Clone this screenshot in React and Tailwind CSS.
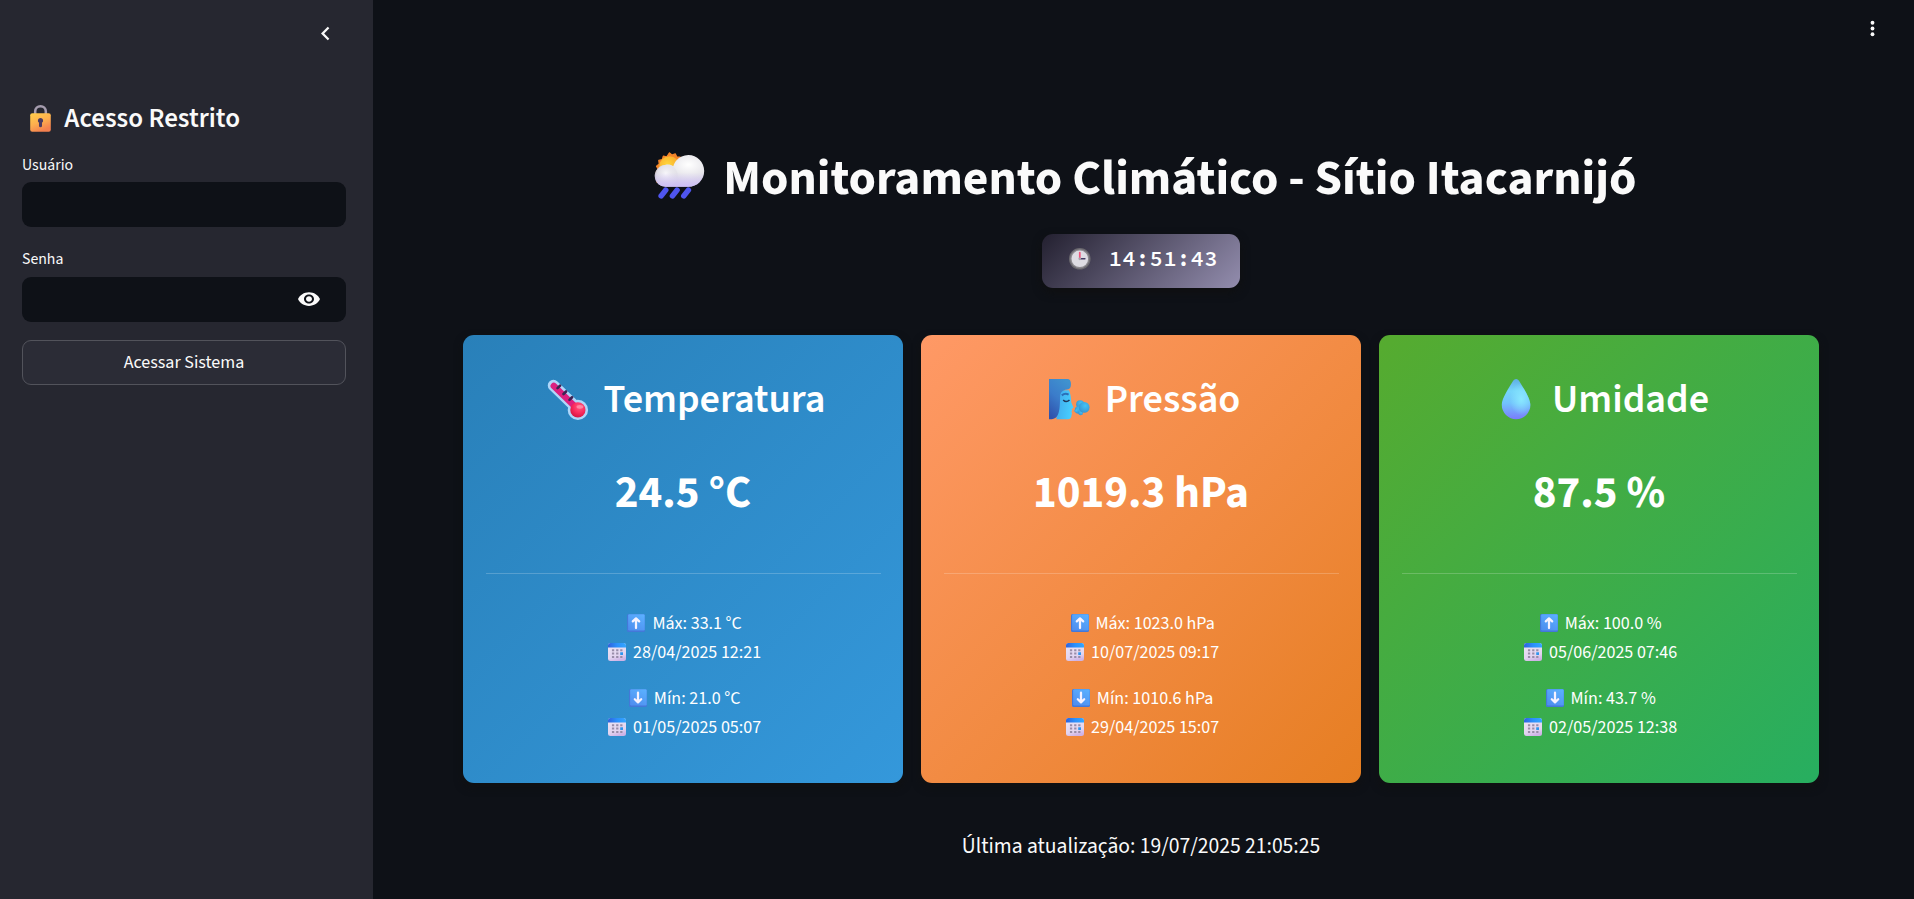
function Gradients() {
  return (
    <svg className="absolute size-0" aria-hidden="true">
      <defs>
        <linearGradient id="lockBody" x1="0" y1="0" x2="0.5" y2="1">
          <stop offset="0" stopColor="#ffce4a" />
          <stop offset="0.55" stopColor="#fdb04e" />
          <stop offset="1" stopColor="#f4804f" />
        </linearGradient>
        <radialGradient id="sun" cx="0.4" cy="0.4" r="0.6">
          <stop offset="0" stopColor="#ffd83b" />
          <stop offset="1" stopColor="#f9a62a" />
        </radialGradient>
        <radialGradient id="cloudBack" cx="0.68" cy="0.3" r="0.75">
          <stop offset="0" stopColor="#ffffff" />
          <stop offset="0.5" stopColor="#e6e5ea" />
          <stop offset="1" stopColor="#c9c6d2" />
        </radialGradient>
        <linearGradient id="cloudBase" x1="0" y1="0" x2="0" y2="1">
          <stop offset="0.55" stopColor="#d7c8ff" stopOpacity="0" />
          <stop offset="1" stopColor="#cdbcfb" stopOpacity="0.9" />
        </linearGradient>
        <radialGradient id="cloudFront" cx="0.45" cy="0.4" r="0.6">
          <stop offset="0" stopColor="#f8f7fb" />
          <stop offset="1" stopColor="#dcdae2" stopOpacity="0.5" />
        </radialGradient>
        <linearGradient id="drop" x1="0.5" y1="0" x2="0.5" y2="1">
          <stop offset="0" stopColor="#5faee4" />
          <stop offset="0.3" stopColor="#76d6fb" />
          <stop offset="0.6" stopColor="#72c3fc" />
          <stop offset="1" stopColor="#7a7cfb" />
        </linearGradient>
        <radialGradient id="dropLight" cx="0.68" cy="0.5" r="0.4">
          <stop offset="0" stopColor="#8beaff" stopOpacity="0.95" />
          <stop offset="1" stopColor="#8beaff" stopOpacity="0" />
        </radialGradient>
        <radialGradient id="bulb" cx="0.6" cy="0.3" r="0.75">
          <stop offset="0" stopColor="#ff5c83" />
          <stop offset="0.5" stopColor="#fb2d60" />
          <stop offset="1" stopColor="#d3123f" />
        </radialGradient>
        <linearGradient id="hair" x1="0.7" y1="0" x2="0.2" y2="1">
          <stop offset="0" stopColor="#3f92cf" />
          <stop offset="0.5" stopColor="#3b7cca" />
          <stop offset="1" stopColor="#2f52ac" />
        </linearGradient>
        <linearGradient id="face" x1="0" y1="0" x2="1" y2="0.2">
          <stop offset="0" stopColor="#3fa6ea" />
          <stop offset="1" stopColor="#47ceff" />
        </linearGradient>
        <radialGradient id="puff" cx="0.6" cy="0.35" r="0.7">
          <stop offset="0" stopColor="#43c3f5" />
          <stop offset="1" stopColor="#3792cf" />
        </radialGradient>
        <linearGradient id="arrowTile" x1="0.8" y1="0" x2="0.3" y2="1">
          <stop offset="0" stopColor="#5ab0ff" />
          <stop offset="1" stopColor="#4f8ff0" />
        </linearGradient>
        <linearGradient id="calTop" x1="0" y1="0" x2="1" y2="0">
          <stop offset="0" stopColor="#2f62dc" />
          <stop offset="0.5" stopColor="#2b90fb" />
          <stop offset="1" stopColor="#34a6ff" />
        </linearGradient>
        <linearGradient id="calPage" x1="0.2" y1="0" x2="0.5" y2="1">
          <stop offset="0" stopColor="#ece5f3" />
          <stop offset="0.75" stopColor="#e2d4f0" />
          <stop offset="1" stopColor="#cfb3e6" />
        </linearGradient>
      </defs>
    </svg>
  );
}

/* Inline pictogram: one em tall, with the side bearings of an emoji glyph. */
function Glyph({ viewBox = "0 0 32 32", children }) {
  return (
    <svg viewBox={viewBox} className="mx-[0.185em] inline-block size-[1em] overflow-visible align-[-0.17em]">
      {children}
    </svg>
  );
}

const RainCloud = () => (
  <Glyph viewBox="-0.6 0.6 32.8 32.8">
    <path d="M9 .5l1.600 1.400 2.200-.7 1.100 2 2.200.1.400 2.300 1.500 1.400V20H.800V15.500L.2 13.200l1.300-1.800L.4 9.300l1.800-1.500-.3-2.300 2.300-.5.700-2.300 2.300.4z" fill="#f5862a" stroke="#f5862a" strokeWidth="0.8" strokeLinejoin="round" />
    <circle cx="9" cy="9.600" r="6.800" fill="url(#sun)" />
    <path d="M7 23a7 7 0 0 1-1-14.500c2-.5 4-.3 5.500.8.500-1.500 1.200-2.800 2.200-3.900C15.600 3.400 18.300 2 21.500 2 27.300 2 32 6.700 32 12.500S27.300 23 21.500 23z" fill="url(#cloudBack)" />
    <circle cx="7.300" cy="15.600" r="7.200" fill="url(#cloudFront)" />
    <path d="M7 23a7 7 0 0 1-1-14.500c2-.5 4-.3 5.500.8.500-1.500 1.200-2.800 2.200-3.900C15.600 3.400 18.300 2 21.500 2 27.300 2 32 6.700 32 12.500S27.300 23 21.500 23z" fill="url(#cloudBase)" />
    <g stroke="#4f55ef" strokeWidth="3.700" strokeLinecap="round">
      <path d="M6.500 25.200L3.500 29" />
      <path d="M14 25.200L11 29" />
      <path d="M21.500 25.200L18.500 29" />
    </g>
  </Glyph>
);

const Lock = () => (
  <Glyph>
    <path d="M9.700 12V7.700a6.300 6.300 0 0 1 12.600 0V12" fill="none" stroke="#a59cae" strokeWidth="3" />
    <rect x="3.800" y="9.800" width="24.400" height="21.800" rx="2.400" fill="url(#lockBody)" />
    <path d="M16 15.300a3.200 3.200 0 0 1 1.800 5.800V24.500a1.800 1.800 0 0 1-3.600 0v-3.400A3.200 3.200 0 0 1 16 15.300z" fill="#4a3a60" />
  </Glyph>
);

const Clock = () => (
  <Glyph>
    <circle cx="16" cy="16" r="16" fill="#6c6a70" />
    <circle cx="16" cy="16" r="14.200" fill="#8d8a90" />
    <circle cx="16" cy="16" r="12.300" fill="#dedce3" />
    <path d="M16 16V7" stroke="#f2547c" strokeWidth="2.600" strokeLinecap="round" />
    <path d="M16.500 16h7" stroke="#433b63" strokeWidth="2.400" strokeLinecap="round" />
    <circle cx="16" cy="16" r="2" fill="#a9a4ad" />
  </Glyph>
);

const Thermometer = () => (
  <Glyph viewBox="0.3 -0.4 31.6 31.6">
    <path d="M4.600 4.700L24 23.500" stroke="#afd6f9" strokeWidth="9" strokeLinecap="round" />
    <circle cx="23.800" cy="23.900" r="8" fill="#afd6f9" />
    <path d="M4.800 5L22.500 22.200" stroke="#dc1f7f" strokeWidth="5" strokeLinecap="round" />
    <circle cx="23.800" cy="23.900" r="6" fill="url(#bulb)" />
    <ellipse cx="25.400" cy="21.500" rx="2.700" ry="1.500" fill="#ff92ab" opacity="0.8" />
    <g stroke="#3c2453" strokeWidth="2.100" strokeLinecap="round">
      <path d="M7.800 6.800l2-2" />
      <path d="M12.500 11.400l2-2" />
      <path d="M17.200 16l2-2" />
    </g>
  </Glyph>
);

const BlowingFace = () => (
  <Glyph>
    <path d="M6 32h9c2 0 2.600-1 2.900-2.500l.1-1 .4-1.600-.7-.7.7-1-.4-1.600 1.500-.6-.3-1-1.500-3.500-.2-2.500c0-2-.6-4.500-1.500-7H5z" fill="url(#face)" />
    <path d="M0 0h14.500C16.500 0 17.500 1.500 17.500 4s-.6 4-3 4.400C10 9 8.900 11 8.800 15 8.700 23 8.500 32 2 32H0z" fill="url(#hair)" />
    <path d="M10.200 13c1.700-1.400 3.600-1.600 5.400-.6" stroke="#2c6fb8" strokeWidth="1.700" fill="none" />
    <path d="M11.300 16.700c1.600 1.700 3.300 1.700 5 0" stroke="#20395c" strokeWidth="1.200" fill="none" />
    <g fill="url(#puff)">
      <circle cx="24.800" cy="20.200" r="3.200" />
      <circle cx="23.500" cy="24.700" r="3" />
      <circle cx="25.200" cy="27" r="1.900" />
      <circle cx="28" cy="22.600" r="4.300" />
      <path d="M19.400 25.500l4-2.200v4z" />
    </g>
  </Glyph>
);

const dropPath = "M16 0c1.200 0 2 .8 2.700 2 2.600 4.600 8.700 13 8.700 18.600A11.400 11.400 0 0 1 4.600 20.600C4.600 15 10.700 6.600 13.300 2 14 .8 14.800 0 16 0z";
const Drop = () => (
  <Glyph>
    <path d={dropPath} fill="url(#drop)" />
    <path d={dropPath} fill="url(#dropLight)" />
  </Glyph>
);

const Arrow = ({ down }) => (
  <Glyph>
    <rect width="32" height="32" rx="2.800" fill="#4378d8" />
    <rect x="2" y="0.500" width="29.500" height="29" rx="2.200" fill="url(#arrowTile)" />
    <path
      d={down ? "M16 6.500v17M10.300 18.300L16 23.800l5.700-5.500" : "M16 25V8M10.300 13.200L16 7.700l5.700 5.500"}
      fill="none"
      stroke="#f5f2ff"
      strokeWidth="4"
      strokeLinecap="round"
      strokeLinejoin="round"
    />
  </Glyph>
);

const Calendar = () => (
  <Glyph>
    <rect width="32" height="32" rx="4.500" fill="url(#calPage)" />
    <path d="M0 8V4.500A4.500 4.500 0 0 1 4.500 0h23A4.500 4.500 0 0 1 32 4.500V8z" fill="url(#calTop)" />
    <g fill="#998da9">
      <path d="M7 11h4v3.600H7zM14.500 11h4v3.600h-4zM21.700 11h4v3.600h-4zM7 17h4v3.600H7zM14.500 17h4v3.600h-4zM7 23h4v3.600H7zM14.500 23h4v3.600h-4zM21.700 23h4v3.600h-4z" />
    </g>
    <path d="M21.700 16.500h5v4.800h-5z" fill="#2f95ee" />
  </Glyph>
);

const cards = [
  {
    title: "Temperatura",
    Icon: Thermometer,
    value: "24.5 °C",
    max: "33.1 °C",
    maxDate: "28/04/2025 12:21",
    min: "21.0 °C",
    minDate: "01/05/2025 05:07",
    bg: "bg-[linear-gradient(135deg,#2980b9,#3498db)]",
  },
  {
    title: "Pressão",
    Icon: BlowingFace,
    value: "1019.3 hPa",
    max: "1023.0 hPa",
    maxDate: "10/07/2025 09:17",
    min: "1010.6 hPa",
    minDate: "29/04/2025 15:07",
    bg: "bg-[linear-gradient(135deg,#ff9966,#e67e22)]",
  },
  {
    title: "Umidade",
    Icon: Drop,
    value: "87.5 %",
    max: "100.0 %",
    maxDate: "05/06/2025 07:46",
    min: "43.7 %",
    minDate: "02/05/2025 12:38",
    bg: "bg-[linear-gradient(135deg,#56ab2f,#27ae60)]",
  },
];

function Card({ title, Icon, value, max, maxDate, min, minDate, bg }) {
  return (
    <section className={`h-[448px] rounded-[11px] px-[22.5px] pt-[41px] text-center text-white shadow-[0_4px_9px_rgba(16,16,16,0.8)] ${bg}`}>
      <h2 className="text-[40.200px] leading-[48px] font-semibold whitespace-nowrap">
        <Icon /> {title}
      </h2>
      <p className="mt-[42px] text-[45px] leading-[54px] font-bold">{value}</p>
      <div className="mt-[53px] border-t border-white/20 pt-[36px] text-[18px] leading-[28.5px]">
        <p>
          <Arrow /> Máx: {max}
          <br />
          <Calendar /> {maxDate}
        </p>
        <p className="mt-[18px]">
          <Arrow down /> Mín: {min}
          <br />
          <Calendar /> {minDate}
        </p>
      </div>
    </section>
  );
}

function Sidebar() {
  return (
    <aside className="flex w-[373px] shrink-0 flex-col bg-[#262730] pr-[27px] pl-[22px]">
      <div className="flex h-[67px] items-center justify-end pr-[7px]">
        <svg viewBox="0 0 24 24" className="size-[27px]" fill="#fafafa">
          <path d="M15.410 7.410L14 6l-6 6 6 6 1.410-1.410L10.830 12z" />
        </svg>
      </div>
      <h2 className="mt-[36px] text-[27px] leading-[32px] font-semibold">
        <Lock /> Acesso Restrito
      </h2>
      <form className="mt-[18px] flex flex-col">
        <label className="text-[15.750px] leading-[25px]">Usuário</label>
        <div className="mt-[4px] h-[45px] rounded-[9px] bg-[#0e1117]" />
        <label className="mt-[20px] text-[15.750px] leading-[25px]">Senha</label>
        <div className="mt-[5px] flex h-[45px] items-center justify-end rounded-[9px] bg-[#0e1117] pr-[25px] pb-px">
          <svg viewBox="0 0 24 24" preserveAspectRatio="none" className="h-[22px] w-6" fill="#fafafa">
            <path d="M12 4.500C7 4.500 2.730 7.610 1 12c1.730 4.390 6 7.500 11 7.500s9.270-3.110 11-7.500c-1.730-4.390-6-7.500-11-7.500zM12 17c-2.760 0-5-2.240-5-5s2.240-5 5-5 5 2.240 5 5-2.240 5-5 5zm0-8c-1.660 0-3 1.340-3 3s1.340 3 3 3 3-1.340 3-3-1.340-3-3-3z" />
          </svg>
        </div>
        <button type="button" className="mt-[18px] h-[45px] rounded-[9px] border border-[#52535b] bg-[#2b2c36] text-[18px] leading-[28px]">
          Acessar Sistema
        </button>
      </form>
    </aside>
  );
}

export default function App() {
  return (
    <div className="flex h-[899px] w-[1914px] overflow-hidden bg-[#0e1117] font-['Source_Sans_Pro','Source_Sans_3','Noto_Sans_CJK_JP',sans-serif] text-[#fafafa]">
      <Gradients />
      <Sidebar />
      <main className="flex flex-1 flex-col items-center pr-[95px] pl-[90px]">
        <header className="-mr-[65px] flex h-[57px] items-center self-end">
          <svg viewBox="0 0 24 24" className="size-[23px]" fill="#fafafa">
            <circle cx="12" cy="6" r="2" />
            <circle cx="12" cy="12" r="2" />
            <circle cx="12" cy="18" r="2" />
          </svg>
        </header>
        <h1 className="mt-[92px] text-[49.500px] leading-[60px] font-bold whitespace-nowrap">
          <RainCloud /> Monitoramento Climático - Sítio Itacarnijó
        </h1>
        <div className="mt-[25px] h-[54px] w-[198px] rounded-[11px] bg-[linear-gradient(135deg,#232030,#938dae)] pt-[10px] pl-[23.5px] font-['Source_Code_Pro','Liberation_Mono',monospace] text-[21.600px] leading-[30px] font-semibold tracking-[0.720px] whitespace-nowrap text-white shadow-[0_4px_10px_rgba(16,16,16,0.9)]">
          <Clock /> 14:51:43
        </div>
        <div className="mt-[47px] grid w-full grid-cols-3 gap-[18px]">
          {cards.map((card) => (
            <Card key={card.title} {...card} />
          ))}
        </div>
        <p className="mt-[47px] text-[21.600px] leading-[34px]">Última atualização: 19/07/2025 21:05:25</p>
      </main>
    </div>
  );
}
